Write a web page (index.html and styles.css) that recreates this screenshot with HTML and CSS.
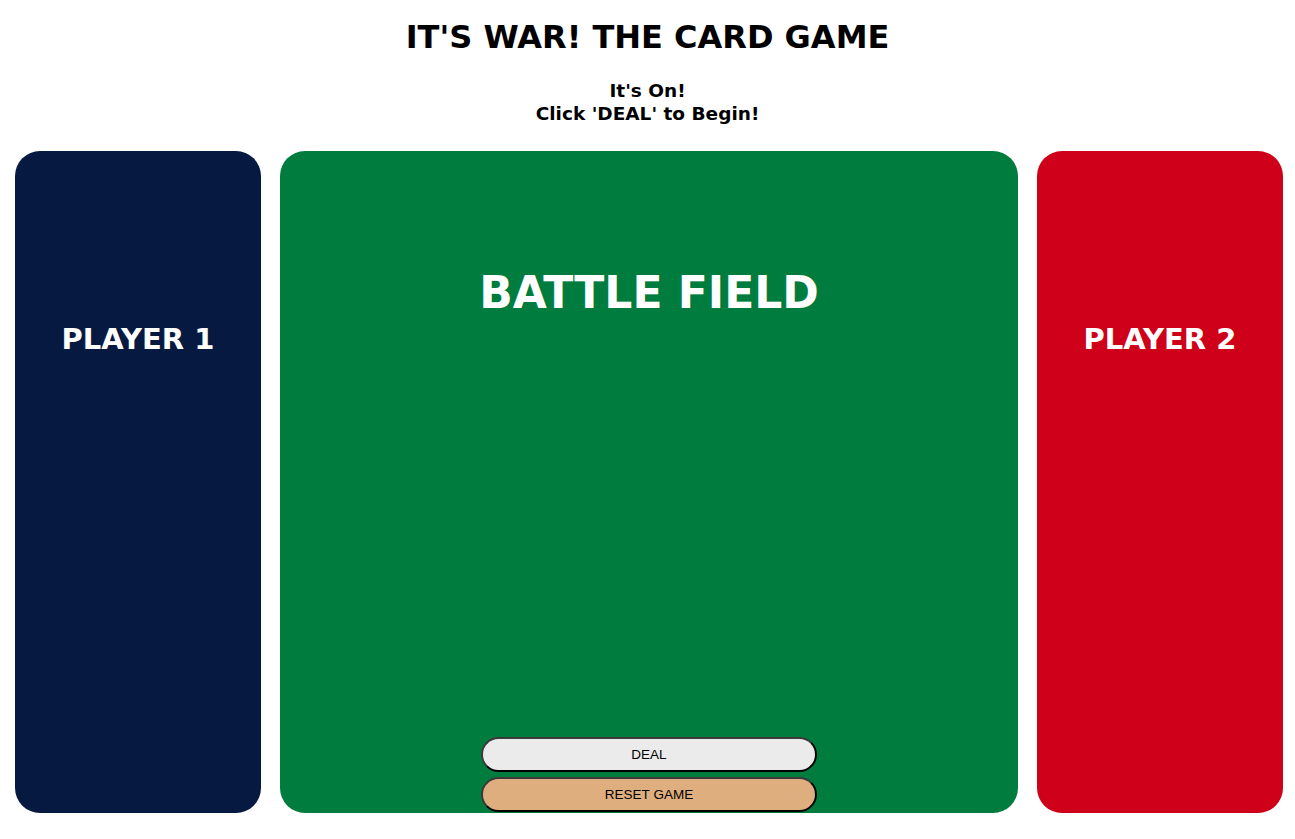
FILE: index.html
```html
<!DOCTYPE html>
<html>
<head>
<meta charset="utf-8">
<title>War</title>
<link rel="stylesheet" href="styles.css">
</head>
<body>
<header class="header">
  <h1 class="title">IT'S WAR! THE CARD GAME</h1>
  <p class="status">It's On!<br>Click 'DEAL' to Begin!</p>
</header>
<main class="board">
  <section class="player player-one">
    <h2 class="player-name">PLAYER 1</h2>
  </section>
  <section class="field">
    <h2 class="field-title">BATTLE FIELD</h2>
    <div class="controls">
      <button class="btn btn-deal">DEAL</button>
      <button class="btn btn-reset">RESET GAME</button>
    </div>
  </section>
  <section class="player player-two">
    <h2 class="player-name">PLAYER 2</h2>
  </section>
</main>
</body>
</html>
```
FILE: styles.css
```css
* { box-sizing: border-box; }
html, body { margin: 0; padding: 0; background: #fff; }
body {
  font-family: "DejaVu Sans", Verdana, sans-serif;
  color: #000;
  height: 839px;
  overflow: hidden;
}
.header {
  text-align: center;
  padding-top: 18px;
}
.title {
  margin: 0;
  font-size: 32px;
  font-weight: bold;
  line-height: 38px;
}
.status {
  margin: 23px 0 0;
  font-size: 18.5px;
  font-weight: bold;
  line-height: 23px;
}
.board {
  display: flex;
  gap: 19px;
  padding: 0 12px 0 15px;
  margin-top: 26px;
  height: 662px;
}
.player, .field {
  border-radius: 25px;
  color: #fff;
  text-align: center;
}
.player {
  width: 246px;
  flex: none;
  padding-top: 170px;
}
.player-one { background: #051941; }
.player-two { background: #cf0019; }
.player-name {
  margin: 0;
  font-size: 29px;
  line-height: 36px;
}
.field {
  flex: 1;
  background: #007d3e;
  display: flex;
  flex-direction: column;
  align-items: center;
  padding-top: 115px;
}
.field-title {
  margin: 0;
  font-size: 44px;
  line-height: 54px;
}
.controls {
  margin-top: auto;
  display: flex;
  flex-direction: column;
  gap: 5px;
  width: 336px;
  padding-bottom: 1px;
}
.btn {
  height: 35px;
  border-radius: 18px;
  border: 2px outset #3a3a3a;
  font-family: "Liberation Sans", Arial, sans-serif;
  font-size: 13.5px;
  color: #000;
  cursor: pointer;
}
.btn-deal { background: #ebebeb; }
.btn-reset { background: #dfae7f; }
```
